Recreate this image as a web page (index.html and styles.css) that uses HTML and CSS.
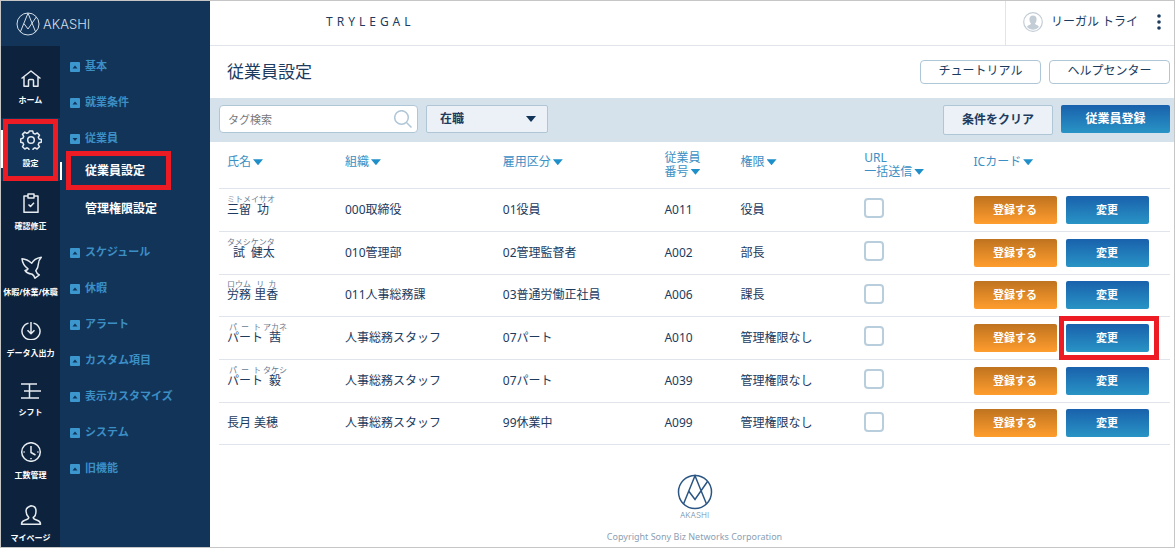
FILE: index.html
```html
<!DOCTYPE html>
<html lang="ja">
<head>
<meta charset="utf-8">
<title>AKASHI - 従業員設定</title>
<meta name="viewport" content="width=device-width, initial-scale=1">
<link rel="stylesheet" href="styles.css">
</head>
<body>
<svg class="defs" aria-hidden="true">
  <symbol id="mark" viewBox="0 0 36 36">
    <circle cx="18" cy="18" r="16.5"/>
    <path d="M6.500 30 18 1.800 29.500 30M12 17.500 18 25.500 30.500 7.500"/>
  </symbol>
  <symbol id="box-up" viewBox="0 0 10 10"><rect width="10" height="10" rx="1" fill="#3c97ce"/><path d="M2.500 6.500h5L5 3.500z" fill="#123459"/></symbol>
  <symbol id="box-down" viewBox="0 0 10 10"><rect width="10" height="10" rx="1" fill="#3c97ce"/><path d="M2.500 4h5L5 7z" fill="#123459"/></symbol>
</svg>
<div class="app">
  <aside class="sidebar">
    <a class="brand" href="#"><svg class="brand-mark"><use href="#mark"/></svg>AKASHI</a>
    <div class="menus">
      <nav class="rail" aria-label="メイン">
        <a href="#"><svg width="22" height="17" viewBox="0 0 22 17"><path d="M1.500 8.500 11 1l9.500 7.500M4 6.800V16.200h4.500V10.500q0-1 1-1h3q1 0 1 1v5.700H18V6.800"/></svg>ホーム</a>
        <a href="#" class="active marked"><svg width="22" height="20" viewBox="0 0 22 20"><path d="M9.300 1h3.400l.6 2.300 1.900.8 2-1.200 2.300 2.300-1.200 2 .8 1.800 2.300.6v.9l-.1 1.700-2.300.6-.8 1.900 1.200 2-2.300 2.300-2-1.200-1.800.8-.6 2.200H9.300l-.6-2.200-1.900-.8-2 1.200-2.300-2.300 1.200-2-.8-1.900-2.200-.6V8.900l2.200-.6.8-1.900-1.200-2 2.300-2.300 2 1.200 1.900-.8z"/><circle cx="11" cy="10" r="3.300"/></svg>設定</a>
        <a href="#"><svg width="22" height="20" viewBox="0 0 22 20"><path d="M8 3H4v16.300h14V3h-4M8 1h6v4H8zM8.500 11.500l2 2 3.500-3.700"/></svg>確認修正</a>
        <a href="#"><svg width="22" height="23" viewBox="0 0 22 23"><path d="M2 2.700Q7 3 11.700 7.300 14 2.500 21.300 1.200q-2.800 3-2.900 6.600-.2 4.200-2.600 6.900 1 3 3.500 4.300l-4.300 3.200q-1-2.900-3.200-4.200-4 .3-6.800-3.500 2.300-.2 3-1.600Q2.500 8.700 2 2.700z"/></svg>休暇/休業/休職</a>
        <a href="#"><svg width="22" height="18" viewBox="0 0 22 18"><path d="M8.500 1.100a9 8.500 0 1 0 5 0M11 0v11.500M7.500 8.300 11 11.700l3.500-3.400"/></svg>データ入出力</a>
        <a href="#"><svg width="22" height="16" viewBox="0 0 22 16"><path d="M1 1h16M4 8h17M1 15h18M9.500 1v14"/></svg>シフト</a>
        <a href="#"><svg width="22" height="20" viewBox="0 0 22 20"><circle cx="11" cy="10" r="9.300"/><path d="M11 4v6.500l4.500 2.500M3.500 10h1.200M17.300 10h1.200M11 16v1.200"/></svg>工数管理</a>
        <a href="#"><svg width="22" height="20" viewBox="0 0 22 20"><path d="M8.800 12.500Q6 9.500 6 6t5-5.200Q16 1 16 6t-2.800 6.500q0 1.700 4 2.800 3.300 1 3.300 3.900h-19q0-2.900 3.300-3.900 4-1.100 4-2.800z"/></svg>マイページ</a>
      </nav>
      <nav class="submenu" aria-label="設定">
        <button type="button"><svg><use href="#box-up"/></svg>基本</button>
        <button type="button"><svg><use href="#box-up"/></svg>就業条件</button>
        <button type="button" aria-expanded="true"><svg><use href="#box-down"/></svg>従業員</button>
        <div class="children">
          <a href="#" class="current"><span class="marked">従業員設定</span></a>
          <a href="#">管理権限設定</a>
        </div>
        <button type="button"><svg><use href="#box-up"/></svg>スケジュール</button>
        <button type="button"><svg><use href="#box-up"/></svg>休暇</button>
        <button type="button"><svg><use href="#box-up"/></svg>アラート</button>
        <button type="button"><svg><use href="#box-up"/></svg>カスタム項目</button>
        <button type="button"><svg><use href="#box-up"/></svg>表示カスタマイズ</button>
        <button type="button"><svg><use href="#box-up"/></svg>システム</button>
        <button type="button"><svg><use href="#box-up"/></svg>旧機能</button>
      </nav>
    </div>
  </aside>
  <main class="main">
    <header class="topbar">
      <div class="company">TRYLEGAL</div>
      <div class="user">
        <svg width="20" height="20" viewBox="0 0 20 20"><circle cx="10" cy="10" r="9.300" fill="#fff" stroke="#c3cdd6" stroke-width="1.200"/><path d="M10 3.500q3.600 0 3.600 4 0 2.300-1.600 4 .2 1.300 2.400 1.800 1.300.4 1.600 1.800A8 8 0 0 1 4 15.100q.3-1.400 1.600-1.800 2.200-.5 2.400-1.800-1.600-1.700-1.600-4 0-4 3.600-4z" fill="#c3cdd6"/></svg>
        <span>リーガル トライ</span>
        <button type="button" class="more" aria-label="メニュー"><svg width="4" height="16" viewBox="0 0 4 16"><circle cx="2" cy="2" r="1.800"/><circle cx="2" cy="8" r="1.800"/><circle cx="2" cy="14" r="1.800"/></svg></button>
      </div>
    </header>
    <div class="heading">
      <h1>従業員設定</h1>
      <button type="button" class="help">チュートリアル</button>
      <button type="button" class="help">ヘルプセンター</button>
    </div>
    <form class="filters">
      <div class="search">
        <input type="text" placeholder="タグ検索" aria-label="タグ検索">
        <svg width="18" height="18" viewBox="0 0 18 18"><circle cx="7.500" cy="7.500" r="6.800"/><path d="m12.500 12.500 5 5"/></svg>
      </div>
      <div class="picker">
        <select aria-label="在職状況"><option>在職</option></select>
        <i class="caret"></i>
      </div>
      <button type="button" class="clear">条件をクリア</button>
      <button type="button" class="btn blue register">従業員登録</button>
    </form>
    <section class="list">
      <table>
        <colgroup><col class="c-name"><col class="c-org"><col class="c-type"><col class="c-no"><col class="c-role"><col class="c-url"><col></colgroup>
        <thead>
          <tr>
            <th><button type="button" class="sort">氏名<i class="caret"></i></button></th>
            <th><button type="button" class="sort">組織<i class="caret"></i></button></th>
            <th><button type="button" class="sort">雇用区分<i class="caret"></i></button></th>
            <th><button type="button" class="sort two">従業員<br>番号<i class="caret"></i></button></th>
            <th><button type="button" class="sort">権限<i class="caret"></i></button></th>
            <th><button type="button" class="sort two">URL<br>一括送信<i class="caret"></i></button></th>
            <th><button type="button" class="sort">ICカード<i class="caret"></i></button></th>
          </tr>
        </thead>
        <tbody>
          <tr><td><ruby>三留<rt>ミトメ</rt></ruby><ruby>功<rt>イサオ</rt></ruby></td><td>000取締役</td><td>01役員</td><td>A011</td><td>役員</td><td><input type="checkbox" aria-label="三留 功を選択"></td><td><div class="actions"><button type="button" class="btn orange">登録する</button><button type="button" class="btn blue">変更</button></div></td></tr>
          <tr><td><ruby>試<rt>タメシ</rt></ruby><ruby>健太<rt>ケンタ</rt></ruby></td><td>010管理部</td><td>02管理監督者</td><td>A002</td><td>部長</td><td><input type="checkbox" aria-label="試 健太を選択"></td><td><div class="actions"><button type="button" class="btn orange">登録する</button><button type="button" class="btn blue">変更</button></div></td></tr>
          <tr><td><ruby>労務<rt>ロウム</rt></ruby> <ruby>里香<rt>リカ</rt></ruby></td><td>011人事総務課</td><td>03普通労働正社員</td><td>A006</td><td>課長</td><td><input type="checkbox" aria-label="労務 里香を選択"></td><td><div class="actions"><button type="button" class="btn orange">登録する</button><button type="button" class="btn blue">変更</button></div></td></tr>
          <tr><td><ruby>パート<rt>パート</rt></ruby><ruby>茜<rt>アカネ</rt></ruby></td><td>人事総務スタッフ</td><td>07パート</td><td>A010</td><td>管理権限なし</td><td><input type="checkbox" aria-label="パート 茜を選択"></td><td><div class="actions"><button type="button" class="btn orange">登録する</button><button type="button" class="btn blue marked">変更</button></div></td></tr>
          <tr><td><ruby>パート<rt>パート</rt></ruby><ruby>毅<rt>タケシ</rt></ruby></td><td>人事総務スタッフ</td><td>07パート</td><td>A039</td><td>管理権限なし</td><td><input type="checkbox" aria-label="パート 毅を選択"></td><td><div class="actions"><button type="button" class="btn orange">登録する</button><button type="button" class="btn blue">変更</button></div></td></tr>
          <tr><td>長月 美穂</td><td>人事総務スタッフ</td><td>99休業中</td><td>A099</td><td>管理権限なし</td><td><input type="checkbox" aria-label="長月 美穂を選択"></td><td><div class="actions"><button type="button" class="btn orange">登録する</button><button type="button" class="btn blue">変更</button></div></td></tr>
        </tbody>
      </table>
    </section>
    <footer class="footer">
      <svg class="footer-mark"><use href="#mark"/></svg>
      <div class="footer-name">AKASHI</div>
      <small>Copyright Sony Biz Networks Corporation</small>
    </footer>
  </main>
</div>
</body>
</html>
```

FILE: styles.css
```css
* { box-sizing: border-box; }

:root {
  --navy: #123459;
  --ink: #1c3b5e;
  --line: #dfe5ea;
  --edge: #afc6d6;
  --link: #3c8fc4;
}

body {
  margin: 0;
  color: var(--ink);
  font: 12px/16px "Noto Sans", "Noto Sans CJK JP", sans-serif;
}

button, input, select { margin: 0; color: inherit; font: inherit; }
button { padding: 0; border: 0; background: none; cursor: pointer; }
a { color: inherit; text-decoration: none; }
svg { flex: none; display: block; }
.defs { position: absolute; width: 0; height: 0; }

.app {
  display: flex;
  min-height: 100vh;
  border: 1px solid #c6c6c6;
  background: #fff;
}

/* Sidebar */
.sidebar {
  flex: none;
  display: flex;
  flex-direction: column;
  background: var(--navy);
}
.brand {
  display: flex;
  align-items: center;
  gap: 3px;
  height: 45px;
  padding-left: 15px;
  color: #d5dfe9;
  font: 300 13px/20px Inter, "Liberation Sans", sans-serif;
}
.brand-mark { width: 24px; height: 24px; fill: none; stroke: #d5dfe9; stroke-width: 1.5; }
.menus { flex: 1; display: flex; }

.rail {
  width: 59px;
  padding-top: 12px;
  background: #0d233d;
  color: #fff;
  font-size: 8px;
  font-weight: 700;
  line-height: 14px;
  white-space: nowrap;
}
.rail a {
  display: flex;
  flex-direction: column;
  align-items: center;
  gap: 6px;
  padding: 12px 0 11px;
}
.rail a:last-child { padding-bottom: 0; }
.rail svg { fill: none; stroke: #e6ebf0; stroke-width: 1.5; stroke-linejoin: round; }
.rail .active { background: var(--navy); }
.rail .active::before {
  content: "";
  position: absolute;
  left: 0;
  top: 12px;
  width: 2px;
  height: 38px;
  background: #fff;
}

/* Red call-out frame */
.marked { position: relative; }
.marked::after {
  content: "";
  position: absolute;
  inset: 1px 2px 0;
  border: 5px solid #ed1c24;
  pointer-events: none;
}

.submenu {
  display: flex;
  flex-direction: column;
  width: 150px;
  padding-top: 2px;
  color: var(--link);
}
.submenu button {
  display: flex;
  align-items: center;
  gap: 5px;
  height: 36px;
  padding-left: 10px;
  font-size: 11px;
  font-weight: 700;
}
.submenu svg { width: 10px; height: 10px; margin-top: 2px; }
.children {
  display: flex;
  flex-direction: column;
  margin: -4px 0 6px;
  color: #fff;
  font-weight: 700;
}
.children a { display: flex; align-items: center; height: 38px; padding-left: 25px; }
.current { position: relative; }
.current::before {
  content: "";
  position: absolute;
  left: 0;
  top: 10px;
  width: 2px;
  height: 18px;
  background: #fff;
}
.current .marked::after { inset: -12px -26px -11px -19px; }

/* Main column */
.main { flex: 1; min-width: 0; display: flex; flex-direction: column; }
.topbar {
  display: flex;
  justify-content: space-between;
  height: 45px;
  border-bottom: 1px solid var(--line);
}
.company { padding: 13px 0 0 116px; letter-spacing: 4px; }
.user {
  display: flex;
  align-items: center;
  gap: 8px;
  padding: 0 13px 2px 17px;
  border-left: 1px solid var(--line);
}
.more { margin-left: 11px; fill: var(--ink); }

.heading {
  display: flex;
  align-items: center;
  gap: 8px;
  height: 52px;
  padding: 0 4px 0 17px;
}
h1 { flex: 1; margin: 0; font-size: 17px; font-weight: 400; line-height: 24px; }
.help {
  width: 121px;
  height: 24px;
  padding-bottom: 3px;
  border: 1px solid var(--edge);
  border-radius: 4px;
  line-height: 18px;
}

.filters {
  display: flex;
  gap: 8px;
  height: 44px;
  padding: 7px 4px 0 9px;
  background: #d5e2eb;
}
.search, .picker { position: relative; height: 28px; }
.search { width: 199px; }
.search input {
  width: 100%;
  height: 28px;
  padding: 0 32px 0 8px;
  border: 1px solid var(--edge);
  border-radius: 4px;
  background: #fff;
  font-size: 11px;
}
.search input::placeholder { color: #75787c; }
.search svg { position: absolute; right: 6px; top: 5px; fill: none; stroke: #afc6d6; stroke-width: 1.5; }
.picker { width: 122px; margin-right: auto; }
.picker select {
  appearance: none;
  width: 100%;
  height: 28px;
  padding: 0 24px 0 13px;
  border: 1px solid var(--edge);
  border-radius: 2px;
  background: #ebf1f6;
  font-weight: 700;
}
.caret {
  display: inline-block;
  width: 10px;
  height: 6px;
  margin-left: 2px;
  background: #1f8fca;
  clip-path: polygon(0 0, 100% 0, 50% 100%);
  vertical-align: 1px;
}
.picker .caret { position: absolute; right: 12px; top: 11px; background: var(--navy); pointer-events: none; }
.clear {
  width: 110px;
  height: 30px;
  border: 1px solid var(--edge);
  border-radius: 2px;
  background: #ebf1f6;
  font-weight: 700;
}
.btn {
  width: 83px;
  height: 28px;
  border-radius: 2px;
  color: #fff;
  font-size: 11px;
  font-weight: 700;
}
.blue { background: linear-gradient(#1961ac, #2994c5); }
.orange { background: linear-gradient(#bf731f, #ff9d2e); }
.register { width: 109px; font-size: 12px; }

/* Employee table */
.list { padding: 0 4px 0 9px; }
table { width: 100%; table-layout: fixed; border-collapse: collapse; }
.c-name { width: 12.4%; }
.c-org { width: 16.6%; }
.c-type { width: 17%; }
.c-no { width: 8%; }
.c-role { width: 13%; }
.c-url { width: 11.5%; }
th, td { padding: 0 0 0 8px; text-align: left; vertical-align: middle; white-space: nowrap; }
tr { border-bottom: 1px solid var(--line); }
thead tr { height: 46px; }
tbody tr { height: 43px; }
tbody tr:nth-child(3n) { height: 42px; }
td { line-height: 40px; }
.sort {
  display: block;
  padding-bottom: 5px;
  color: var(--link);
  font-weight: 400;
  line-height: 14px;
  text-align: left;
}
.sort.two { padding-bottom: 0; }
rt { color: #6b7c90; font-size: 8px; line-height: 12px; }
td input {
  appearance: none;
  display: block;
  width: 20px;
  height: 20px;
  margin-top: -3px;
  border: 2px solid #b9cedc;
  border-radius: 4px;
  background: #fff;
}
td input:checked { background: var(--link); }
.actions { display: flex; gap: 9px; line-height: 16px; }
.actions .marked::after { inset: -8px -10px -8px -7px; }

.footer {
  display: flex;
  flex-direction: column;
  align-items: center;
  padding: 29px 4px 0 9px;
}
.footer-mark { width: 36px; height: 36px; fill: none; stroke: #2b5583; stroke-width: 1.5; }
.footer-name { color: #6f8caa; font: 300 8px/10px Inter, "Liberation Sans", sans-serif; }
.footer small { margin-top: 10px; color: #8ba0b4; font-size: 9px; line-height: 14px; }
```
